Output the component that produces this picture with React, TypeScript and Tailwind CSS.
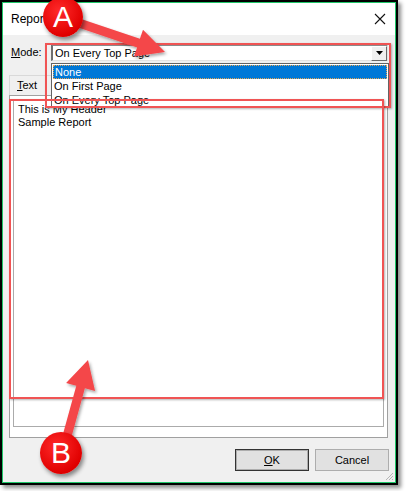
import React from 'react'

const font = { fontFamily: '"Liberation Sans", Arial, sans-serif' }

function CloseIcon() {
  return (
    <svg width="12" height="12" viewBox="0 0 12 12" className="block">
      <path d="M1 1 L11 11 M11 1 L1 11" stroke="#111" strokeWidth="1.1" fill="none" />
    </svg>
  )
}

function Grip() {
  return (
    <svg width="10" height="10" viewBox="0 0 10 10" className="block">
      <path d="M9 2 L2 9 M9 5 L5 9 M9 8 L8 9" stroke="#b5b5b5" strokeWidth="1" fill="none" />
    </svg>
  )
}

function Callout({ letter, className }: { letter: string; className: string }) {
  return (
    <div
      className={
        'absolute rounded-full bg-[radial-gradient(circle_at_40%_35%,#ff2a2a,#e00000_70%,#c80000)] shadow-[2px_3px_4px_rgba(0,0,0,0.45)] flex items-center justify-center text-white text-[30px] leading-none ' +
        className
      }
      style={font}
    >
      {letter}
    </div>
  )
}

export default function App() {
  return (
    <div className="relative w-[406px] h-[491px] bg-white overflow-hidden text-[11px] text-black" style={font}>
      {/* dialog window */}
      <div className="w-[398px] h-[485px] border-2 border-black shadow-[3px_3px_4px_rgba(0,0,0,0.45)]">
        <div className="h-full border border-[#1fc76a] flex flex-col">
          {/* title bar */}
          <div className="h-[34px] bg-white flex items-center justify-between pl-[8px] pr-[9px]">
            <span className="text-[12px]">Report</span>
            <CloseIcon />
          </div>

          <div className="flex-1 bg-[#f0f0f0] flex flex-col">
            {/* mode row */}
            <div className="mt-[9px] h-[17px] flex items-center pl-[8px]">
              <span className="w-[40px]">
                <span className="underline">M</span>ode:
              </span>
              <div className="w-[337px] h-[17px] bg-white border-l-2 border-t-2 border-l-[#6e6e6e] border-t-[#8a8a8a] border-r border-b border-r-[#e3e3e3] border-b-[#e3e3e3] flex items-center justify-between">
                <span className="pl-[2px] leading-none">On Every Top Page</span>
                <div className="w-[16px] h-[15px] bg-[#f0f0f0] border border-t-white border-l-white border-r-[#6a6a6a] border-b-[#6a6a6a] flex items-center justify-center">
                  <svg width="7" height="4" viewBox="0 0 7 4" className="block">
                    <path d="M0 0 H7 L3.5 4 Z" fill="#000" />
                  </svg>
                </div>
              </div>
            </div>

            {/* tab */}
            <div className="mt-[14px] ml-[6px] h-[20px] w-[44px] border-t border-l border-[#d9d9d9] bg-[#f0f0f0] flex items-center pl-[7px]">
              <span>
                <span className="underline">T</span>ext
              </span>
            </div>

            {/* tab panel */}
            <div className="ml-[6px] w-[379px] h-[343px] border border-[#a0a0a0] bg-white p-[3px] pb-[10px] flex">
              <div className="flex-1 border border-[#ababab] pl-[4px] pt-[3px] leading-[13px]">
                <div>This is My Header</div>
                <div>Sample Report</div>
              </div>
            </div>

            {/* buttons */}
            <div className="mt-[11px] flex justify-end gap-[6px] pr-[6px]">
              <button className="w-[74px] h-[22px] bg-[#e1e1e1] border border-[#333] outline outline-1 -outline-offset-2 outline-[#adadad] flex items-center justify-center">
                <span>
                  <span className="underline">O</span>K
                </span>
              </button>
              <button className="w-[74px] h-[22px] bg-[#e1e1e1] border border-[#adadad] flex items-center justify-center">
                Cancel
              </button>
            </div>
            <div className="flex-1 flex justify-end items-end pr-[1px] pb-[1px]">
              <Grip />
            </div>
          </div>
        </div>
      </div>

      {/* open dropdown list */}
      <div className="absolute left-[51px] top-[63px] w-[338px] h-[44px] bg-white border border-[#646464] pt-[1px] leading-[14px]">
        <div className="mx-[1px] h-[14px] bg-[#0078d7] text-white border border-dotted border-[#e7a552] pl-[1px] leading-[12px]">
          None
        </div>
        <div className="pl-[2px]">On First Page</div>
        <div className="pl-[2px]">On Every Top Page</div>
      </div>

      {/* annotation boxes */}
      <div className="absolute left-[45px] top-[43px] w-[346px] h-[65px] border-2 border-[#f05454] shadow-[1px_1px_2px_rgba(0,0,0,0.3)]" />
      <div className="absolute left-[9px] top-[99px] w-[375px] h-[300px] border-2 border-[#f05454] shadow-[1px_1px_2px_rgba(0,0,0,0.3)]" />

      {/* arrows */}
      <svg className="absolute left-0 top-0 pointer-events-none" width="406" height="491" viewBox="0 0 406 491">
        <defs>
          <filter id="sh" x="-20%" y="-20%" width="140%" height="140%">
            <feDropShadow dx="1.5" dy="2" stdDeviation="1.5" floodColor="#000" floodOpacity="0.35" />
          </filter>
        </defs>
        <polygon
          points="77.4,17.7 139.9,38.8 143,29.8 165,52 134,56.4 137.1,47.4 74.6,26.3"
          fill="#f4474a"
          filter="url(#sh)"
        />
        <polygon
          points="61.7,438.8 76.3,385.8 66.1,383 88,360 95.1,391 84.9,388.2 70.3,441.2"
          fill="#f4474a"
          filter="url(#sh)"
        />
      </svg>

      <Callout letter="A" className="left-[43px] top-[-3px] w-[40px] h-[40px]" />
      <Callout letter="B" className="left-[40px] top-[432px] w-[42px] h-[42px]" />
    </div>
  )
}
